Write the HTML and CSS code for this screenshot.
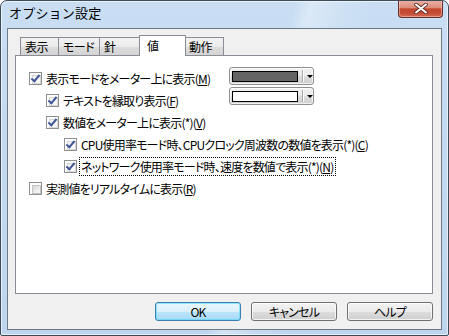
FILE: index.html
```html
<!DOCTYPE html>
<html lang="ja">
<head>
<meta charset="utf-8">
<title>オプション設定</title>
<link rel="stylesheet" href="styles.css">
</head>
<body>
<div class="window">
  <div class="titlebar">
    <span class="title">オプション設定</span>
    <div class="close">
      <svg width="16" height="11" viewBox="0 0 16 11">
        <path d="M3 1.5 L13 9.5 M13 1.5 L3 9.5" stroke="#5a2a22" stroke-width="3.6" stroke-linecap="round"/>
        <path d="M3 1.5 L13 9.5 M13 1.5 L3 9.5" stroke="#ffffff" stroke-width="2" stroke-linecap="round"/>
      </svg>
    </div>
  </div>
  <div class="client">
    <div class="tabs">
      <div class="tab w-hyoji">表示</div>
      <div class="tab w-mode">モード</div>
      <div class="tab w-hari">針</div>
      <div class="tab active">値</div>
      <div class="tab w-dosa">動作</div>
    </div>
    <div class="page">
      <div class="opts">
        <label class="row lv0"><span class="cb on"></span><span class="lbl">表示モードをメーター上に表示(<u>M</u>)</span></label>
        <div class="combos">
          <div class="combo"><span class="swatch dark"></span><span class="sep"></span><span class="arrow"></span></div>
          <div class="combo"><span class="swatch light"></span><span class="sep"></span><span class="arrow"></span></div>
        </div>
        <label class="row lv1"><span class="cb on"></span><span class="lbl">テキストを縁取り表示(<u>F</u>)</span></label>
        <label class="row lv1 wide"><span class="cb on"></span><span class="lbl">数値をメーター上に表示(*)(<u>V</u>)</span></label>
        <label class="row lv2 wide"><span class="cb on"></span><span class="lbl">CPU使用率モード時、CPUクロック周波数の数値を表示(*)(<u>C</u>)</span></label>
        <label class="row lv2 wide"><span class="cb on"></span><span class="lbl focus">ネットワーク使用率モード時、速度を数値で表示(*)(<u>N</u>)</span></label>
        <label class="row lv0 wide last"><span class="cb"></span><span class="lbl">実測値をリアルタイムに表示(<u>R</u>)</span></label>
      </div>
    </div>
    <div class="buttons">
      <button class="btn default">OK</button>
      <button class="btn">キャンセル</button>
      <button class="btn">ヘルプ</button>
    </div>
  </div>
</div>
</body>
</html>
```
FILE: styles.css
```css
* { box-sizing: border-box; }
html, body { margin: 0; padding: 0; }
body {
  width: 449px;
  height: 336px;
  overflow: hidden;
  background: #ffffff;
  font-family: "Noto Sans CJK JP", "Noto Sans", sans-serif;
  font-size: 12px;
  color: #000;
}
.window {
  width: 449px;
  height: 336px;
  display: flex;
  flex-direction: column;
  border: 1px solid #3d4a58;
  border-radius: 7px 7px 2px 2px;
  background:
    linear-gradient(105deg, rgba(255,255,255,0) 0%, rgba(255,255,255,0) 55%, rgba(255,255,255,0.35) 58%, rgba(255,255,255,0.1) 64%, rgba(255,255,255,0) 70%),
    linear-gradient(180deg, #c9def3 0%, #c3daf1 40%, #bdd5ee 100%);
  box-shadow: inset 0 0 0 1px rgba(255,255,255,0.6);
  overflow: hidden;
}
.titlebar {
  height: 27px;
  display: flex;
  align-items: flex-start;
  padding-left: 8px;
}
.title {
  font-size: 13px;
  line-height: 23px;
  letter-spacing: 0.2px;
  color: #000;
}
.close {
  margin-left: auto;
  margin-right: 5px;
  width: 45px;
  height: 18px;
  margin-top: -1px;
  border: 1px solid #6a3026;
  border-top: none;
  border-radius: 0 0 4px 4px;
  background: linear-gradient(180deg, #e9b3a6 0%, #dc8e7c 45%, #c7472f 52%, #c24a34 75%, #d66a55 100%);
  display: flex;
  align-items: center;
  justify-content: center;
  box-shadow: inset 0 0 0 1px rgba(255,220,210,0.45);
}
.client {
  flex: 1;
  margin: 0 6px 5px 6px;
  border: 1px solid #6f7a86;
  background: #f0f0f0;
  display: flex;
  flex-direction: column;
  padding: 6px 8px 8px 7px;
}
.tabs {
  display: flex;
  height: 20px;
  padding-left: 5px;
  align-items: flex-end;
  position: relative;
  z-index: 1;
  font-feature-settings: "palt";
  letter-spacing: -0.5px;
}
.tab {
  height: 18px;
  border: 1px solid #898c95;
  border-bottom: none;
  margin-right: -1px;
  padding-left: 4px;
  line-height: 17px;
  background: linear-gradient(180deg, #f3f3f3 0%, #ebebeb 50%, #dddddd 51%, #d3d3d3 100%);
}
.w-hyoji { width: 39px; }
.w-mode { width: 42px; }
.w-hari { width: 43px; }
.w-dosa { width: 39px; }
.tab.active {
  width: 47px;
  height: 21px;
  margin-left: -2px;
  margin-right: -1px;
  margin-bottom: -1px;
  padding-left: 7px;
  line-height: 19px;
  background: #ffffff;
  position: relative;
  z-index: 2;
}
.tab.active + .tab { border-left: none; margin-left: 0; }
.page {
  height: 239px;
  border: 1px solid #898c95;
  background: #ffffff;
  padding: 11px 0 0 13px;
}
.opts {
  display: grid;
  grid-template-columns: 200px 85px;
  grid-auto-rows: 22px;
}
.row {
  display: flex;
  align-items: center;
  white-space: nowrap;
  font-feature-settings: "palt";
  letter-spacing: -0.8px;
}
.row.wide { grid-column: 1 / span 2; }
.row.lv1 { padding-left: 17px; }
.row.lv2 { padding-left: 35px; }
.row.last { margin-top: 1px; }
.lbl { margin-left: 3px; line-height: 15px; padding: 0 1px; }
.lbl.focus { outline: 1px dotted #000; outline-offset: 0; padding: 1px 2px 1px 1px; }
u { text-decoration: underline; text-underline-offset: 1px; }
.cb {
  width: 13px;
  height: 13px;
  flex: none;
  border: 1px solid #8e8f8f;
  background: #ffffff;
  padding: 2px;
  display: block;
  position: relative;
}
.cb::before {
  content: "";
  display: block;
  width: 7px;
  height: 7px;
  border: 1px solid #c5c5c5;
  background: linear-gradient(135deg, #d6d6d6 0%, #ececec 60%, #f8f8f8 100%);
}
.cb.on::before {
  border-color: #d8d8d8;
  background: linear-gradient(135deg, #f0f0f0 0%, #fbfbfb 100%);
}
.cb.on::after {
  content: "";
  position: absolute;
  left: 3px;
  top: 0px;
  width: 3px;
  height: 7px;
  border-right: 2px solid #3f5697;
  border-bottom: 2px solid #3f5697;
  transform: rotate(40deg);
}
.combos {
  grid-row: 1 / span 2;
  grid-column: 2;
  display: flex;
  flex-direction: column;
  gap: 2px;
  margin-top: 0px;
}
.combo {
  width: 85px;
  height: 18px;
  border: 1px solid #8e8f8f;
  border-radius: 3px;
  background: linear-gradient(180deg, #f2f2f2 0%, #ebebeb 50%, #dddddd 51%, #cfcfcf 100%);
  display: flex;
  align-items: center;
  padding-left: 2px;
  box-shadow: inset 0 0 0 1px rgba(255,255,255,0.7);
}
.swatch {
  width: 66px;
  height: 11px;
  border: 1px solid #000;
}
.swatch.dark { background: #646464; }
.swatch.light { background: #ffffff; }
.sep {
  width: 1px;
  height: 12px;
  margin-left: 4px;
  background: #a8a8a8;
  box-shadow: 1px 0 0 #ffffff;
}
.arrow {
  margin-left: 4px;
  width: 0;
  height: 0;
  border-left: 3px solid transparent;
  border-right: 3px solid transparent;
  border-top: 3px solid #000;
}
.buttons {
  display: flex;
  justify-content: flex-end;
  gap: 10px;
  margin-top: 8px;
}
.btn {
  width: 86px;
  height: 19px;
  padding: 0;
  font-family: inherit;
  font-size: 12px;
  font-feature-settings: "palt";
  letter-spacing: -0.8px;
  line-height: 15px;
  color: #000;
  border: 1px solid #707070;
  border-radius: 3px;
  background: linear-gradient(180deg, #f2f2f2 0%, #ebebeb 50%, #dddddd 51%, #cfcfcf 100%);
  box-shadow: inset 0 0 0 1px rgba(255,255,255,0.75);
}
.btn.default {
  border-color: #3c7fb1;
  background: linear-gradient(180deg, #eaf6fd 0%, #d9f0fc 50%, #bee6fd 51%, #a7d9f5 100%);
  box-shadow: inset 0 0 0 1px rgba(72,216,251,0.55);
}
```
